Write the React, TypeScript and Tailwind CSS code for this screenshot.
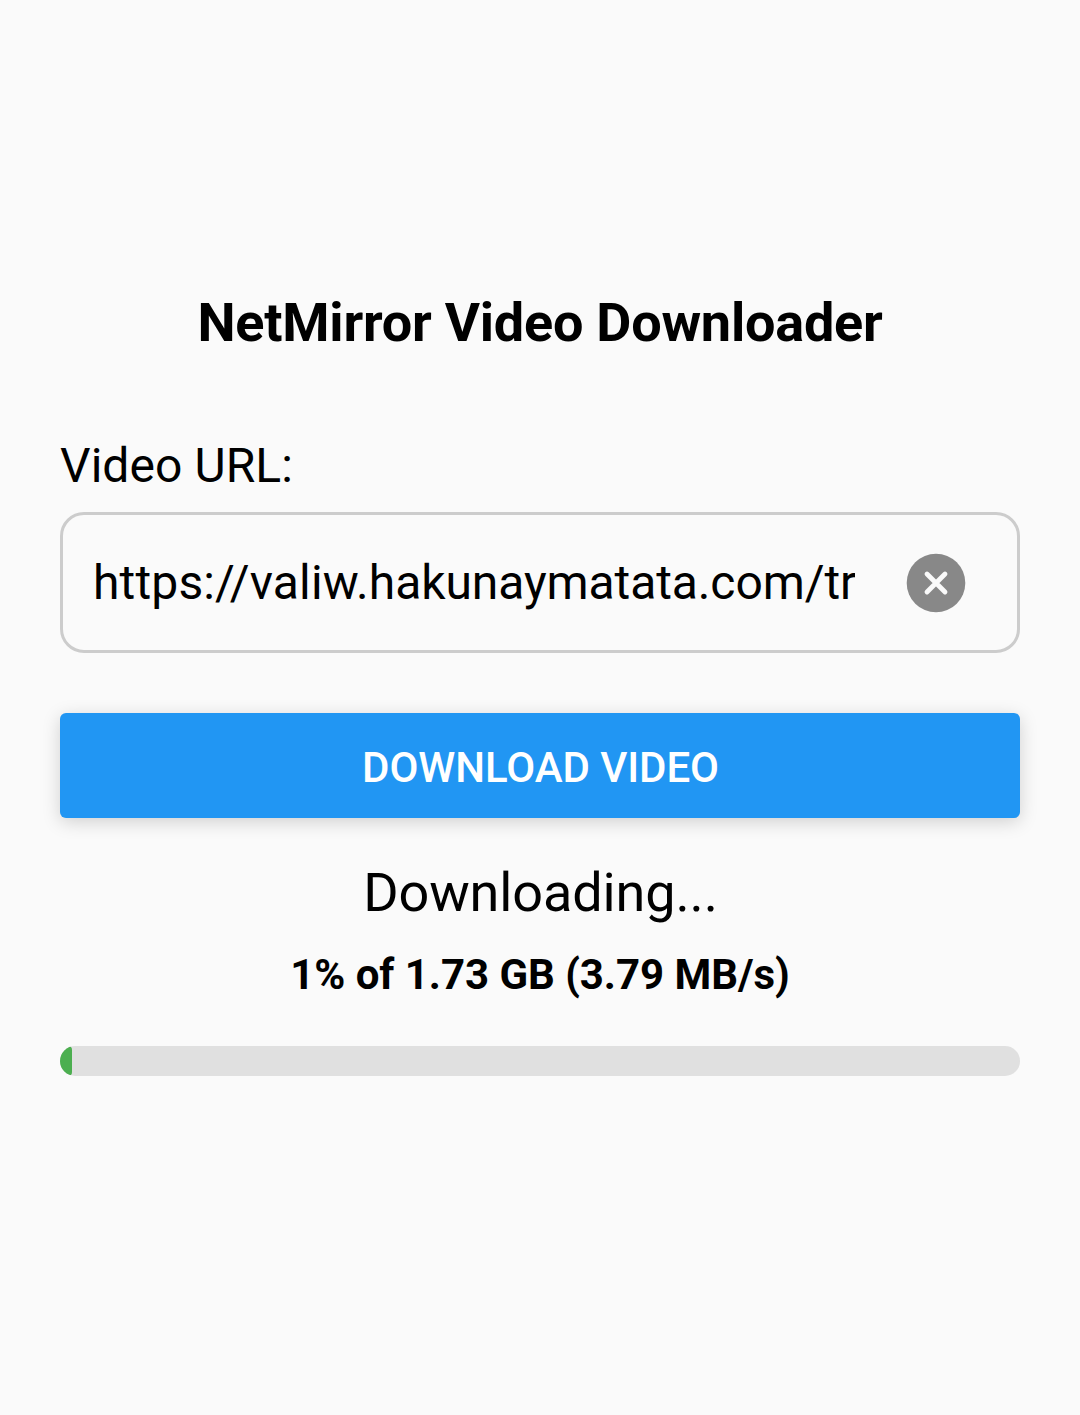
export default function App() {
  return (
    <main className="flex h-[1415px] w-full flex-col bg-[#fafafa] px-[60px] pt-[287px] font-['Roboto',sans-serif] text-black">
      <h1 className="whitespace-nowrap text-center text-[54px] leading-[72px] font-bold tracking-[-0.23px]">NetMirror Video Downloader</h1>
      <label htmlFor="url" className="mt-[75px] text-[48px] leading-[64px] tracking-[0.07px]">Video URL:</label>
      <div className="mt-[14px] flex h-[141px] items-center rounded-[24px] border-3 border-[#cccccc] pl-[30px] pr-[51px]">
        <div id="url" className="w-[762px] overflow-hidden whitespace-nowrap text-[48px] leading-[64px]">
          <span className="tracking-[0.15px]">https://valiw.</span>
          <span className="tracking-[-0.09px]">hakunaymatata.com/tr</span>
        </div>
        <button aria-label="Clear" className="ml-auto size-[60px]">
          <svg viewBox="0 0 60 60" className="size-full">
            <circle cx="30" cy="30" r="29.3" fill="#888" />
            <path d="M21 21L39 39M39 21L21 39" stroke="#fafafa" strokeWidth="4.8" strokeLinecap="round" />
          </svg>
        </button>
      </div>
      <button className="mt-[60px] h-[105px] rounded-[6px] bg-[#2196f3] pt-[4px] pl-px text-[42px] font-medium tracking-[-0.07px] text-white shadow-[0_4px_18px_rgba(0,0,0,0.17)]">DOWNLOAD VIDEO</button>
      <p className="mt-[39px] pl-px text-center text-[54px] leading-[72px] tracking-[-0.12px]">Downloading...</p>
      <p className="mt-[18px] text-center text-[42px] leading-[56px] font-bold tracking-[-0.04px]">1% of 1.73 GB (3.79 MB/s)</p>
      <div className="mt-[43px] h-[30px] overflow-hidden rounded-full bg-[#e0e0e0]">
        <div className="h-full w-[12px] rounded-r-[4px] bg-[#4caf50]" />
      </div>
    </main>
  );
}
